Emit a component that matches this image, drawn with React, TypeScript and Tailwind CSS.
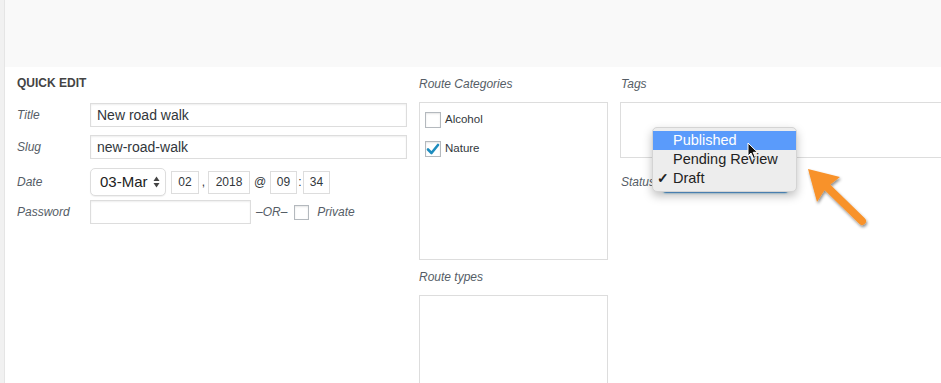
import React from 'react';

function Checkbox({ checked = false }: { checked?: boolean }) {
  return (
    <span className="w-[16px] h-[16px] border border-[#b4b9be] bg-white shadow-[inset_0_1px_2px_rgba(0,0,0,0.1)] flex items-center justify-center shrink-0">
      {checked && (
        <svg width="14" height="14" viewBox="0 0 14 14">
          <path d="M2 7.5 L5.5 11 L12 3" fill="none" stroke="#1e8cbe" strokeWidth="2.6" strokeLinecap="round" strokeLinejoin="round" />
        </svg>
      )}
    </span>
  );
}

function Label({ children, className = '' }: { children: React.ReactNode; className?: string }) {
  return <span className={`italic text-[12px] text-[#555d66] leading-[16px] ${className}`}>{children}</span>;
}

export default function App() {
  return (
    <div className="w-[941px] h-[383px] overflow-hidden bg-[#f1f1f1] relative font-['Liberation_Sans',Arial,sans-serif] text-[#32373c]">
      <div className="ml-[4px] border-l border-[#e5e5e5] h-full flex flex-col">
        <div className="h-[67px] bg-[#f9f9f9] shrink-0" />
        <div className="flex-1 bg-white flex pl-[12px]">
          {/* Left column */}
          <div className="w-[390px] flex flex-col">
            <h4 className="mt-[8px] text-[12px] leading-[16px] font-bold text-[#444] uppercase">Quick Edit</h4>
            <div className="mt-[12px] flex items-center">
              <Label className="w-[73px]">Title</Label>
              <div className="w-[317px] h-[24px] border border-[#ddd] shadow-[inset_0_1px_2px_rgba(0,0,0,0.07)] flex items-center px-[6px] text-[14px] text-[#32373c]">New road walk</div>
            </div>
            <div className="mt-[8px] flex items-center">
              <Label className="w-[73px]">Slug</Label>
              <div className="w-[317px] h-[24px] border border-[#ddd] shadow-[inset_0_1px_2px_rgba(0,0,0,0.07)] flex items-center px-[6px] text-[14px] text-[#32373c]">new-road-walk</div>
            </div>
            <div className="mt-[9px] flex items-center h-[28px] text-[12px] text-[#32373c]">
              <Label className="w-[73px]">Date</Label>
              <div className="w-[76px] h-[28px] border border-[#ddd] rounded-[5px] bg-white shadow-[0_1px_1px_rgba(0,0,0,0.06)] flex items-center pl-[9px] pr-[5px] justify-between">
                <span className="text-[15px] text-[#222]">03-Mar</span>
                <svg width="7" height="12" viewBox="0 0 7 12">
                  <path d="M3.5 0.5 L6.5 5 L0.5 5 Z" fill="#444" />
                  <path d="M3.5 11.5 L6.5 7 L0.5 7 Z" fill="#444" />
                </svg>
              </div>
              <div className="ml-[5px] w-[28px] h-[23px] border border-[#ddd] flex items-center justify-center">02</div>
              <span className="w-[9px] text-center">,</span>
              <div className="w-[42px] h-[23px] border border-[#ddd] flex items-center justify-center">2018</div>
              <span className="w-[20px] text-center">@</span>
              <div className="w-[27px] h-[23px] border border-[#ddd] flex items-center justify-center">09</div>
              <span className="w-[6px] text-center">:</span>
              <div className="w-[27px] h-[23px] border border-[#ddd] flex items-center justify-center">34</div>
            </div>
            <div className="mt-[4px] flex items-center">
              <Label className="w-[73px]">Password</Label>
              <div className="w-[161px] h-[24px] border border-[#ddd] shadow-[inset_0_1px_2px_rgba(0,0,0,0.07)]" />
              <Label className="ml-[5px]">–OR–</Label>
              <span className="ml-[7px]">
                <span className="block w-[15px] h-[15px] border border-[#b4b9be] shadow-[inset_0_1px_2px_rgba(0,0,0,0.1)]" />
              </span>
              <Label className="ml-[8px]">Private</Label>
            </div>
          </div>

          {/* Middle column */}
          <div className="ml-[12px] w-[189px] flex flex-col">
            <Label className="mt-[9px]">Route Categories</Label>
            <div className="mt-[10px] h-[158px] border border-[#ddd] flex flex-col pt-[8px] pl-[5px] gap-[12px]">
              <div className="flex items-center gap-[4px] text-[11.5px] text-[#32373c]">
                <Checkbox />
                <span>Alcohol</span>
              </div>
              <div className="flex items-center gap-[4px] text-[11.5px] text-[#32373c]">
                <Checkbox checked />
                <span>Nature</span>
              </div>
            </div>
            <Label className="mt-[9px]">Route types</Label>
            <div className="mt-[10px] h-[100px] border border-[#ddd]" />
          </div>

          {/* Right column */}
          <div className="ml-[12px] flex-1 flex flex-col">
            <Label className="mt-[9px] ml-[1px]">Tags</Label>
            <div className="mt-[10px] h-[56px] border border-r-0 border-[#ddd]" />
            <div className="mt-[12px] flex items-center">
              <Label className="ml-[1px]">Status</Label>
              <div className="ml-[8px] w-[125px] h-[23px] border border-[#5b9dd9] rounded-[3px] shadow-[0_0_2px_rgba(30,140,190,0.8)] bg-white" />
            </div>
          </div>
        </div>
      </div>

      {/* Native select popup */}
      <div className="absolute left-[652px] top-[127px] w-[145px] h-[65px] rounded-[5px] bg-[#ededed] border border-[#d4d4d4] shadow-[0_4px_10px_rgba(0,0,0,0.25)] py-[3px] text-[14.5px] leading-[19px] text-[#222] font-['Liberation_Sans',Arial,sans-serif]">
        <div className="bg-[#5a9bfb] text-white pl-[20px]">Published</div>
        <div className="pl-[20px]">Pending Review</div>
        <div className="relative pl-[20px]">
          <span className="absolute left-[4px] top-0 text-[14px] font-bold">✓</span>
          Draft
        </div>
      </div>

      {/* Mouse cursor */}
      <svg className="absolute left-[747px] top-[142px]" width="12" height="18" viewBox="0 0 12 18">
        <path d="M1 1 L1 14 L4 11 L6.5 16.5 L8.5 15.6 L6.2 10.3 L10.5 10.3 Z" fill="#111" stroke="#fff" strokeWidth="1" strokeLinejoin="round" />
      </svg>

      {/* Orange annotation arrow */}
      <svg className="absolute left-[800px] top-[160px]" width="75" height="75" viewBox="0 0 75 75">
        <defs>
          <filter id="sh" x="-30%" y="-30%" width="160%" height="160%">
            <feDropShadow dx="1" dy="2" stdDeviation="1.5" floodColor="#000" floodOpacity="0.45" />
          </filter>
        </defs>
        <g filter="url(#sh)">
          <line x1="24" y1="24" x2="62" y2="61" stroke="#f8922a" strokeWidth="8" strokeLinecap="round" />
          <path d="M8 9 L40 17 L31 24 L24 31 L17 42 Z" fill="#f8922a" />
        </g>
      </svg>
    </div>
  );
}
